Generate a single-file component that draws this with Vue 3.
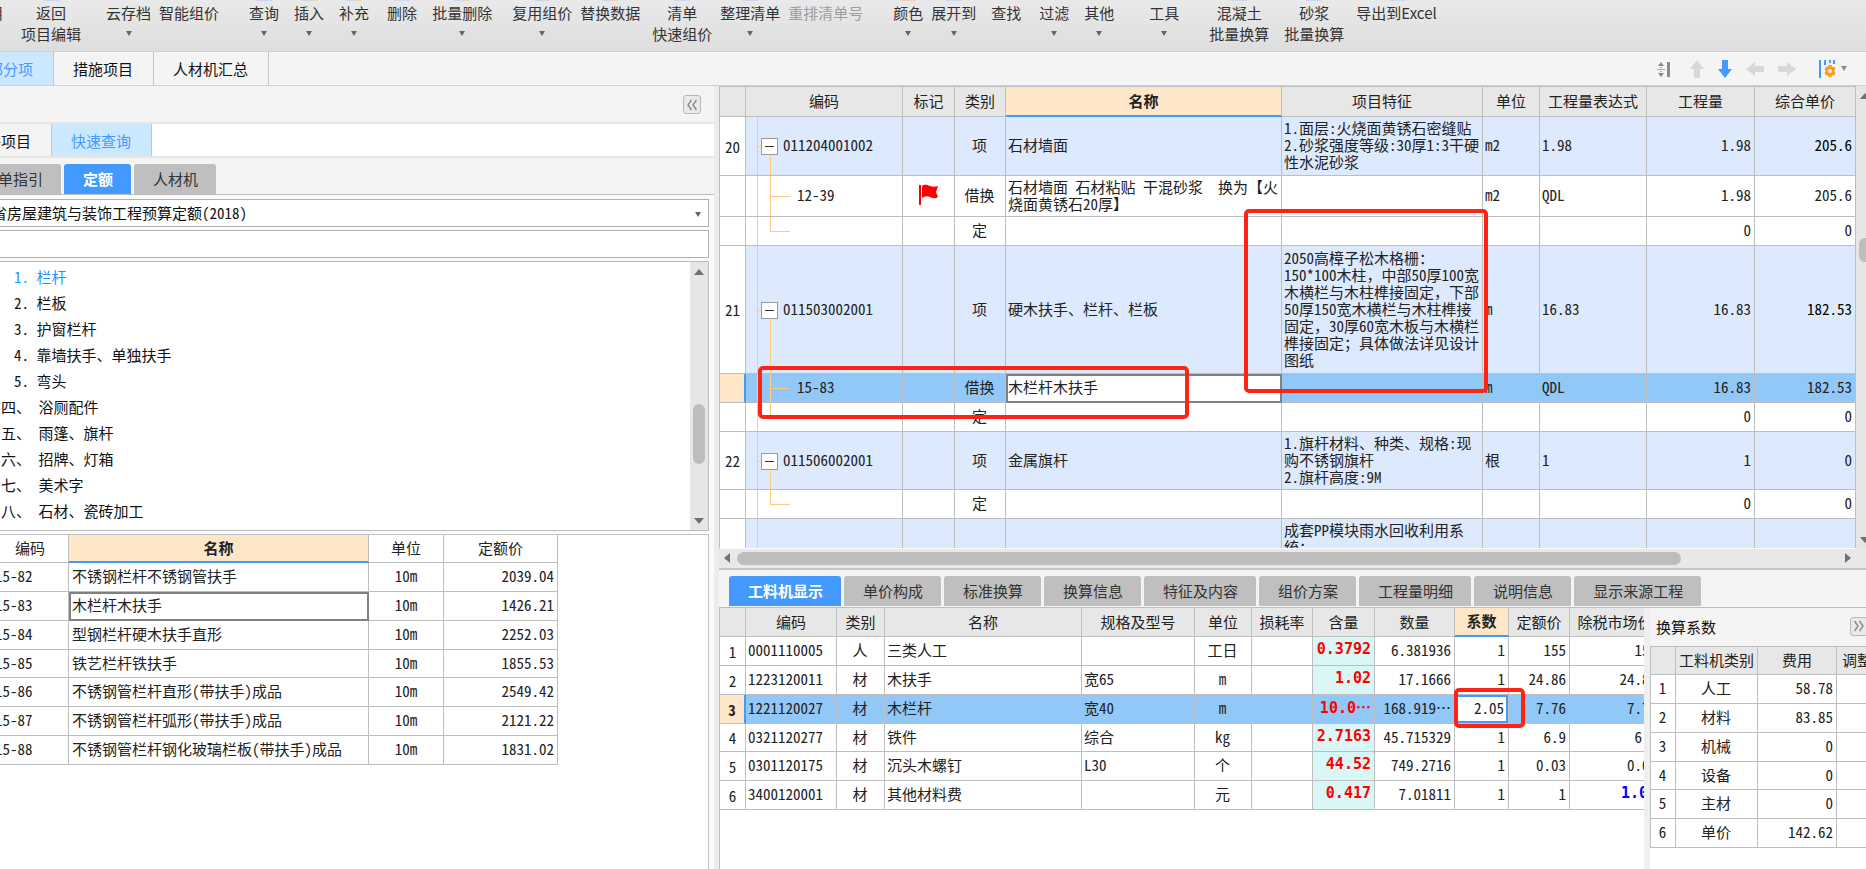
<script setup>
import { ref } from 'vue'

const tools = [
  { a: '调用', gap: 'g0', bit: 'warm' },
  { a: '返回', b: '项目编辑', gap: 'g18', bit: 'cool' },
  { a: '云存档', drop: true, gap: 'g25' },
  { a: '智能组价', gap: 'g8' },
  { a: '查询', drop: true, gap: 'g30', bit: 'cool' },
  { a: '插入', drop: true, gap: 'g15', bit: 'mix' },
  { a: '补充', drop: true, gap: 'g15', bit: 'mix' },
  { a: '删除', gap: 'g18', bit: 'cool' },
  { a: '批量删除', drop: true, gap: 'g15', bit: 'mix' },
  { a: '复用组价', drop: true, gap: 'g20', bit: 'cool' },
  { a: '替换数据', gap: 'g8', bit: 'mix' },
  { a: '清单', b: '快速组价', gap: 'g12', bit: 'cool' },
  { a: '整理清单', drop: true, gap: 'g8', bit: 'cool' },
  { a: '重排清单号', off: true, gap: 'g8' },
  { a: '颜色', drop: true, gap: 'g30', bit: 'pink' },
  { a: '展开到', drop: true, gap: 'g8', bit: 'cool' },
  { a: '查找', gap: 'g15' },
  { a: '过滤', drop: true, gap: 'g18' },
  { a: '其他', drop: true, gap: 'g15' },
  { a: '工具', drop: true, gap: 'g35' },
  { a: '混凝土', b: '批量换算', gap: 'g30', bit: 'cool' },
  { a: '砂浆', b: '批量换算', gap: 'g15', bit: 'cool' },
  { a: '导出到Excel', gap: 'g12', bit: 'cool' },
]

const tree = [
  { n: '1.', t: '栏杆', sub: true, on: true },
  { n: '2.', t: '栏板', sub: true },
  { n: '3.', t: '护窗栏杆', sub: true },
  { n: '4.', t: '靠墙扶手、单独扶手', sub: true },
  { n: '5.', t: '弯头', sub: true },
  { n: '四、', t: '浴厕配件' },
  { n: '五、', t: '雨篷、旗杆' },
  { n: '六、', t: '招牌、灯箱' },
  { n: '七、', t: '美术字' },
  { n: '八、', t: '石材、瓷砖加工' },
]

const quotas = [
  ['15-82', '不锈钢栏杆不锈钢管扶手', '2039.04'],
  ['15-83', '木栏杆木扶手', '1426.21'],
  ['15-84', '型钢栏杆硬木扶手直形', '2252.03'],
  ['15-85', '铁艺栏杆铁扶手', '1855.53'],
  ['15-86', '不锈钢管栏杆直形(带扶手)成品', '2549.42'],
  ['15-87', '不锈钢管栏杆弧形(带扶手)成品', '2121.22'],
  ['15-88', '不锈钢管栏杆钢化玻璃栏板(带扶手)成品', '1831.02'],
]

const items = [
  { h: 'h59', kind: 'item', no: '20', code: '011204001002', type: '项', name: '石材墙面', feat: '1.面层:火烧面黄锈石密缝贴\n2.砂浆强度等级:30厚1:3干硬\n性水泥砂浆', unit: 'm2', expr: '1.98', qty: '1.98', price: '205.6', strong: true },
  { h: 'h41', kind: 'child', code: '12-39', flag: true, type: '借换', name: '石材墙面 石材粘贴 干混砂浆  换为【火\n烧面黄锈石20厚】', unit: 'm2', expr: 'QDL', qty: '1.98', price: '205.6' },
  { h: 'h29', kind: 'last', type: '定', qty: '0', price: '0' },
  { h: 'h128', kind: 'item', no: '21', code: '011503002001', type: '项', name: '硬木扶手、栏杆、栏板', feat: '2050高樟子松木格栅：\n150*100木柱，中部50厚100宽\n木横栏与木柱榫接固定，下部\n50厚150宽木横栏与木柱榫接\n固定，30厚60宽木板与木横栏\n榫接固定；具体做法详见设计\n图纸', unit: 'm', expr: '16.83', qty: '16.83', price: '182.53', strong: true },
  { h: 'h29', kind: 'child', sel: true, code: '15-83', type: '借换', name: '木栏杆木扶手', unit: 'm', expr: 'QDL', qty: '16.83', price: '182.53' },
  { h: 'h29', kind: 'last', type: '定', qty: '0', price: '0' },
  { h: 'h58', kind: 'item', no: '22', code: '011506002001', type: '项', name: '金属旗杆', feat: '1.旗杆材料、种类、规格:现\n购不锈钢旗杆\n2.旗杆高度:9M', unit: '根', expr: '1', qty: '1', price: '0' },
  { h: 'h29', kind: 'last', type: '定', qty: '0', price: '0' },
  { h: 'h58', kind: 'tail', feat: '成套PP模块雨水回收利用系\n统：' },
]

// Full-width punctuation keeps its full advance, so it is split from half-width runs.
const lines = (text) => (text ? text.split('\n') : [])
const runs = (line) => line.split(/([，；：])/).filter(Boolean)
const isWide = (run) => /^[，；：]$/.test(run)

const detailTabs = ['工料机显示', '单价构成', '标准换算', '换算信息', '特征及内容', '组价方案', '工程量明细', '说明信息', '显示来源工程']

const details = [
  ['0001110005', '人', '三类人工', '', '工日', '0.3792', '6.381936', '1', '155', '155'],
  ['1223120011', '材', '木扶手', '宽65', 'm', '1.02', '17.1666', '1', '24.86', '24.86'],
  ['1221120027', '材', '木栏杆', '宽40', 'm', '10.0', '168.919…', '', '7.76', '7.76'],
  ['0321120277', '材', '铁件', '综合', 'kg', '2.7163', '45.715329', '1', '6.9', '6.9'],
  ['0301120175', '材', '沉头木螺钉', 'L30', '个', '44.52', '749.2716', '1', '0.03', '0.03'],
  ['3400120001', '材', '其他材料费', '', '元', '0.417', '7.01811', '1', '1', '1.00'],
]

const factors = [
  ['人工', '58.78'],
  ['材料', '83.85'],
  ['机械', '0'],
  ['设备', '0'],
  ['主材', '0'],
  ['单价', '142.62'],
]

const keyword = ref('')
const factor = ref('2.05')
</script>

<template>
  <div class="app">
    <header class="toolbar">
      <button v-for="(t, i) in tools" :key="i" type="button" class="tool" :class="[t.gap, t.bit, { off: t.off }]" :disabled="t.off">
        <span>{{ t.a }}</span>
        <span v-if="t.b">{{ t.b }}</span>
        <i v-if="t.drop" class="caret"></i>
      </button>
    </header>

    <div class="pagebar">
      <nav class="pages">
        <button type="button" class="page first on">分部分项</button>
        <button type="button" class="page">措施项目</button>
        <button type="button" class="page">人材机汇总</button>
      </nav>
      <div class="actions">
        <button type="button" aria-label="行高">
          <svg width="14" height="18" viewBox="0 0 14 18"><path d="M4 2l3 4H1zM4 17l3-4H1z" fill="#8a8a8a" /><path d="M3 7h2v1H3zM0 9h8v1H0zM3 11h2v1H3z" fill="#aaa" /><path d="M10 2h3v15h-3z" fill="#8a8a8a" /></svg>
        </button>
        <button type="button" aria-label="上移">
          <svg width="14" height="18" viewBox="0 0 14 18"><path d="M7 0l7 9h-4v9H4V9H0z" fill="#d8d8d8" /></svg>
        </button>
        <button type="button" aria-label="下移">
          <svg width="14" height="18" viewBox="0 0 14 18"><path d="M7 18l7-9h-4V0H4v9H0z" fill="#4499ff" /></svg>
        </button>
        <button type="button" aria-label="升级">
          <svg width="18" height="14" viewBox="0 0 18 14"><path d="M0 7l9-7v4h9v6H9v4z" fill="#d8d8d8" /></svg>
        </button>
        <button type="button" aria-label="降级">
          <svg width="18" height="14" viewBox="0 0 18 14"><path d="M18 7L9 0v4H0v6h9v4z" fill="#d8d8d8" /></svg>
        </button>
        <button type="button" class="cols" aria-label="列设置">
          <svg width="18" height="20" viewBox="0 0 18 20">
            <path d="M1 1h2v18H1zM6 1h2v5H6zM11 1h2v3h-2zM15 1h2v4h-2z" fill="#4499ff" />
            <path d="M10.500 6h3l.6 2 2-.4 1.400 2.600-1.400 1.800 1.400 1.800-1.400 2.600-2-.4-.6 2h-3l-.6-2-2 .4-1.400-2.600L7.900 12l-1.400-1.800 1.400-2.600 2 .4z" fill="#ff9a1f" />
            <circle cx="12" cy="12" r="2" fill="#f5f5f5" />
          </svg>
          <i class="caret soft"></i>
        </button>
      </div>
    </div>

    <main class="body">
      <aside class="left">
        <div class="fold">
          <button type="button" class="chev" aria-label="收起">
            <svg width="12" height="12" viewBox="0 0 12 12"><path d="M5.500 1L2 6l3.500 5M10.500 1L7 6l3.500 5" fill="none" stroke="#8a8a8a" stroke-width="1.400" /></svg>
          </button>
        </div>
        <nav class="subpages">
          <button type="button" class="page second">补项目</button>
          <button type="button" class="page on">快速查询</button>
        </nav>
        <nav class="pills">
          <button type="button" class="pill guide">清单指引</button>
          <button type="button" class="pill on">定额</button>
          <button type="button" class="pill">人材机</button>
        </nav>
        <div class="query">
          <div class="pick">
            <select aria-label="定额库"><option>省房屋建筑与装饰工程预算定额(2018)</option></select>
            <i class="caret"></i>
          </div>
          <input v-model="keyword" class="search" type="text" aria-label="查询" />
          <div class="treebox">
            <ul>
              <li v-for="r in tree" :key="r.t" :class="{ sub: r.sub, on: r.on }">{{ r.n }} {{ r.t }}</li>
            </ul>
            <div class="vbar"><i class="up"></i><i class="thumb"></i><i class="down"></i></div>
          </div>
          <div class="quota">
            <table>
              <colgroup><col class="q1" /><col class="q2" /><col class="q3" /><col class="q4" /></colgroup>
              <thead>
                <tr><th>编码</th><th class="hot">名称</th><th>单位</th><th>定额价</th></tr>
              </thead>
              <tbody>
                <tr v-for="(q, i) in quotas" :key="q[0]">
                  <td>{{ q[0] }}</td>
                  <td :class="{ cur: i === 1 }">{{ q[1] }}</td>
                  <td class="c">10m</td>
                  <td class="r">{{ q[2] }}</td>
                </tr>
              </tbody>
            </table>
          </div>
        </div>
      </aside>

      <section class="right">
        <div class="main">
          <div class="gridwrap">
            <div class="grid">
              <table>
                <colgroup>
                  <col class="m0" /><col class="m1" /><col class="m2" /><col class="m3" /><col /><col class="m5" /><col class="m6" /><col class="m7" /><col class="m8" /><col class="m9" />
                </colgroup>
                <thead>
                  <tr>
                    <th></th><th>编码</th><th>标记</th><th>类别</th><th class="hot">名称</th><th>项目特征</th><th>单位</th><th>工程量表达式</th><th>工程量</th><th>综合单价</th>
                  </tr>
                </thead>
                <tbody>
                  <tr v-for="(r, i) in items" :key="i" :class="[r.kind, r.h, { sel: r.sel }]">
                    <td class="no">{{ r.no }}</td>
                    <td class="code">
                      <i class="trunk"></i><i v-if="r.kind !== 'tail'" class="stem"></i><i v-if="r.kind !== 'tail'" class="twig"></i>
                      <button v-if="r.kind === 'item'" type="button" class="minus" aria-label="折叠"></button>
                      <span>{{ r.code }}</span>
                    </td>
                    <td class="c">
                      <svg v-if="r.flag" class="flag" width="21" height="22" viewBox="0 0 21 22"><path d="M1 1h2v20H1z" fill="#f00" /><path d="M4 2c3-2 5-1 8 0s5 1 8 0l-2 6 2 5c-3 2-6 1-8 0s-5-1-8 1z" fill="#f00" /></svg>
                    </td>
                    <td class="c">{{ r.type }}</td>
                    <td class="pre" :class="{ cur: r.sel }">{{ r.name }}</td>
                    <td>
                      <div v-for="(l, j) in lines(r.feat)" :key="j"><span v-for="(p, k) in runs(l)" :key="k" :class="{ wide: isWide(p) }">{{ p }}</span></div>
                    </td>
                    <td>{{ r.unit }}</td>
                    <td>{{ r.expr }}</td>
                    <td class="r">{{ r.qty }}</td>
                    <td class="r" :class="{ strong: r.strong }">{{ r.price }}</td>
                  </tr>
                </tbody>
              </table>
            </div>
            <div class="vbar slim"><i class="up"></i><i class="thumb"></i><i class="down"></i></div>
          </div>
          <div class="hbar"><i class="prev"></i><i class="thumb"></i><i class="next"></i></div>
          <div class="mark mark-row"></div>
          <div class="mark mark-feat"></div>
        </div>

        <div class="lower">
          <nav class="pills dtabs">
            <button v-for="(t, i) in detailTabs" :key="t" type="button" class="pill" :class="{ on: i === 0 }">{{ t }}</button>
          </nav>
          <div class="split">
            <div class="detail">
              <table>
                <colgroup>
                  <col class="m0" /><col class="d1" /><col class="d2" /><col class="d3" /><col class="d4" /><col class="m6" /><col class="d6" /><col class="d7" /><col class="d8" /><col class="d9" /><col class="d6" /><col class="d11" />
                </colgroup>
                <thead>
                  <tr>
                    <th></th><th>编码</th><th>类别</th><th>名称</th><th>规格及型号</th><th>单位</th><th>损耗率</th><th>含量</th><th>数量</th><th class="hot">系数</th><th>定额价</th><th>除税市场价</th>
                  </tr>
                </thead>
                <tbody>
                  <tr v-for="(d, i) in details" :key="d[0]" :class="{ sel: i === 2 }">
                    <td class="no">{{ i + 1 }}</td>
                    <td>{{ d[0] }}</td>
                    <td class="c">{{ d[1] }}</td>
                    <td>{{ d[2] }}</td>
                    <td>{{ d[3] }}</td>
                    <td class="c">{{ d[4] }}</td>
                    <td></td>
                    <td class="r dose">{{ d[5] }}<span v-if="i === 2" class="dots">…</span></td>
                    <td class="r">{{ d[6] }}</td>
                    <td v-if="i === 2" class="edit"><input v-model="factor" type="text" aria-label="系数" /></td>
                    <td v-else class="r">{{ d[7] }}</td>
                    <td class="r">{{ d[8] }}</td>
                    <td class="r" :class="{ blue: i === 5 }">{{ d[9] }}</td>
                  </tr>
                </tbody>
              </table>
              <div class="mark mark-factor"></div>
            </div>
            <div class="factors">
              <div class="fhead">
                <span>换算系数</span>
                <button type="button" class="chev" aria-label="展开">
                  <svg width="12" height="12" viewBox="0 0 12 12"><path d="M1.500 1L5 6l-3.500 5M6.500 1L10 6l-3.500 5" fill="none" stroke="#8a8a8a" stroke-width="1.400" /></svg>
                </button>
              </div>
              <table>
                <colgroup><col class="f0" /><col class="f1" /><col class="f2" /><col class="f3" /></colgroup>
                <thead><tr><th></th><th>工料机类别</th><th>费用</th><th>调整系数</th></tr></thead>
                <tbody>
                  <tr v-for="(f, i) in factors" :key="f[0]">
                    <td class="c">{{ i + 1 }}</td><td class="c">{{ f[0] }}</td><td class="r">{{ f[1] }}</td><td></td>
                  </tr>
                </tbody>
              </table>
            </div>
          </div>
        </div>
      </section>
    </main>
  </div>
</template>

<style>
body {
  margin: 0;
  overflow: hidden;
}
</style>

<style scoped>
.app {
  height: 100vh;
  display: flex;
  flex-direction: column;
  overflow: hidden;
  background: #f4f4f4;
  color: #222;
  font: 15px/17px "Noto Sans CJK SC", sans-serif;
  font-feature-settings: "hwid";
}
.app * {
  box-sizing: border-box;
}
button,
input,
select {
  margin: 0;
  padding: 0;
  border: 0;
  border-radius: 0;
  background: none;
  color: inherit;
  font: inherit;
  font-feature-settings: inherit;
  white-space: nowrap;
}
svg {
  display: block;
}
.caret {
  width: 0;
  height: 0;
  border: 3px solid transparent;
  border-top: 5px solid #666;
  border-bottom: 0;
}
.caret.soft {
  border-top-color: #8a8a8a;
}

.toolbar {
  flex: none;
  height: 52px;
  display: flex;
  align-items: flex-start;
  overflow: hidden;
  border-bottom: 1px solid #cfcfcf;
  background: linear-gradient(#e9e9e9, #dedede);
  color: #333;
  font-feature-settings: normal;
}
.tool {
  position: relative;
  flex: none;
  height: 51px;
  padding-top: 4px;
  display: flex;
  flex-direction: column;
  align-items: center;
  gap: 4px;
}
.tool .caret {
  margin-top: 6px;
}
.tool.off {
  color: #9d9d9d;
}
.tool::before {
  content: "";
  position: absolute;
  top: 0;
  left: calc(50% - 8px);
  width: 16px;
  height: 1px;
}
.cool::before { background: #c9d8ec; }
.warm::before { background: #ffab4a; }
.pink::before { background: #eccdc6; }
.mix::before { background: linear-gradient(90deg, #c9d8ec 60%, #f3d5ad 60%); }
.g0 { margin-left: -27px; }
.g8 { margin-left: 8px; }
.g12 { margin-left: 12px; }
.g15 { margin-left: 15px; }
.g18 { margin-left: 18px; }
.g20 { margin-left: 20px; }
.g25 { margin-left: 25px; }
.g30 { margin-left: 30px; }
.g35 { margin-left: 35px; }

.pagebar {
  flex: none;
  height: 34px;
  display: flex;
  justify-content: space-between;
  border-bottom: 1px solid #d2d2d2;
}
.pages,
.subpages {
  display: flex;
}
.page {
  padding: 0 20px 0 19px;
  border-right: 1px solid #c6c6c6;
  color: #111;
}
.page.on {
  background: #cce8ff;
  color: #4499ff;
}
.page.first {
  margin-left: -46px;
}
.page.second {
  margin-left: -33px;
}
.actions {
  display: flex;
  align-items: center;
  padding: 0 19px 0 0;
  gap: 14px;
}
.actions button:first-child {
  margin-right: 5px;
}
.actions .cols {
  display: flex;
  align-items: center;
  gap: 5px;
  margin-left: 8px;
}

.body {
  flex: 1;
  min-height: 0;
  display: flex;
}
.left {
  flex: none;
  width: 714px;
  display: flex;
  flex-direction: column;
  overflow: hidden;
}
.fold {
  flex: none;
  height: 38px;
  padding: 9px 13px;
  display: flex;
  justify-content: flex-end;
  border-bottom: 2px solid #e6e6e6;
}
.chev {
  width: 18px;
  height: 19px;
  display: grid;
  place-items: center;
  border: 1px solid #b8b8b8;
  border-radius: 3px;
  background: #e9e9e9;
}
.subpages {
  flex: none;
  height: 34px;
  border-bottom: 2px solid #e6e6e6;
  background: #fff;
}
.subpages .page {
  background: #f4f4f4;
}
.subpages .page.on {
  background: #cce8ff;
}
.pills {
  flex: none;
  height: 37px;
  padding-top: 6px;
  display: flex;
  gap: 3px;
  border-bottom: 1px solid #bcbcbc;
}
.pill {
  height: 30px;
  padding: 0 18px 1px 19px;
  border-radius: 3px 3px 0 0;
  background: #bfbfbf;
  color: #333;
}
.pill.on {
  background: #4499ff;
  color: #fff;
  font-weight: bold;
}
.pill.guide {
  margin-left: -36px;
}
.query {
  flex: 1;
  min-height: 0;
  margin-left: -9px;
  padding: 4px 5px 0 0;
  display: flex;
  flex-direction: column;
  gap: 3px;
  background: #fafafa;
}
.pick {
  position: relative;
  flex: none;
  height: 28px;
  border: 1px solid #b0b0b0;
  background: #fff;
}
.pick select {
  width: 100%;
  height: 26px;
  padding-bottom: 2px;
  appearance: none;
  color: #111;
}
.pick .caret {
  position: absolute;
  right: 7px;
  top: 12px;
}
.search {
  flex: none;
  height: 28px;
  padding: 0 4px;
  border: 1px solid #b0b0b0;
  background: #fff;
}
.treebox {
  flex: none;
  height: 270px;
  display: flex;
  justify-content: space-between;
  border: 1px solid #bcbcbc;
  background: #fff;
}
.treebox ul {
  margin: 0;
  padding: 2px 0 0 9px;
  list-style: none;
  color: #111;
}
.treebox li {
  height: 26px;
  line-height: 26px;
  white-space: nowrap;
}
.treebox li.sub {
  padding-left: 13px;
}
.treebox li.on {
  color: #1e96ff;
}
.vbar {
  position: relative;
  width: 18px;
  background: #e6e6e6;
}
.vbar i,
.hbar i {
  position: absolute;
}
.up,
.down {
  left: 4px;
  border: 5px solid transparent;
}
.up {
  top: 7px;
  border-top: 0;
  border-bottom: 6px solid #707078;
}
.down {
  bottom: 6px;
  border-bottom: 0;
  border-top: 6px solid #707078;
}
.vbar .thumb {
  top: 142px;
  left: 3px;
  width: 12px;
  height: 60px;
  border-radius: 6px;
  background: #bdbdbd;
}
.quota {
  flex: 1;
  min-height: 0;
  border: 1px solid #c4c4c4;
  border-bottom: 0;
  background: #fff;
}

table {
  table-layout: fixed;
  border-collapse: separate;
  border-spacing: 0;
}
th,
td {
  height: 29px;
  padding: 0 3px 3px 2px;
  border-right: 1px solid #bebebe;
  border-bottom: 1px solid #bebebe;
  font-weight: normal;
  text-align: left;
  white-space: nowrap;
  overflow: hidden;
}
th {
  padding: 0 0 2px;
  text-align: center;
}
tbody tr:nth-child(4n) td {
  height: 28px;
}
.c {
  text-align: center;
}
.r {
  text-align: right;
}
.hot {
  background: #fee6c9;
  border-bottom: 2px solid #4499ff;
  font-weight: bold;
}
.cur {
  background: #fff;
  outline: 2px solid #808080;
  outline-offset: -2px;
}
.quota table {
  width: 566px;
}
.q1 { width: 77px; }
.q2 { width: 300px; }
.q3 { width: 75px; }
.q4 { width: 114px; }
.quota th {
  height: 28px;
}
.quota td {
  padding-left: 3px;
}

.right {
  flex: 1;
  min-width: 0;
  display: flex;
  flex-direction: column;
  border-left: 5px solid #ececec;
}
.main {
  position: relative;
  flex: 1;
  min-height: 0;
  display: flex;
  flex-direction: column;
}
.gridwrap {
  flex: 1;
  min-height: 0;
  display: flex;
}
.grid {
  flex: 1;
  min-width: 0;
  overflow: hidden;
  border-left: 1px solid #bebebe;
  border-bottom: 1px solid #fff;
  background: #fff;
}
.grid table {
  width: 100%;
}
.grid th {
  height: 31px;
  border-top: 1px solid #bebebe;
}
.grid th,
.detail th,
.factors th {
  background: #e7e7e7;
}
.grid th.hot,
.detail th.hot {
  background: #fee6c9;
}
.m0 { width: 26px; }
.m1 { width: 157px; }
.m2 { width: 52px; }
.m3 { width: 51px; }
.m5 { width: 201px; }
.m6 { width: 57px; }
.m7 { width: 107px; }
.m8 { width: 108px; }
.m9 { width: 101px; }
.grid .h29 td { height: 29px; }
.grid .h41 td { height: 41px; }
.grid .h58 td { height: 58px; }
.grid .h59 td { height: 59px; }
.grid .h128 td { height: 128px; }
.item td,
.tail td {
  background: #dde9fd;
}
.tail td {
  padding-top: 2px;
  vertical-align: top;
}
.wide {
  font-feature-settings: normal;
}
.strong {
  color: #000;
}
.sel td {
  background: #92c8f7;
}
.sel td.cur {
  background: #fff;
}
tr td.no {
  padding: 0;
  background: #fff;
  text-align: center;
}
tr.sel td.no {
  border-right: 2px solid #4499ff;
  background: #fee6c9;
  font-weight: bold;
}
.pre {
  white-space: pre;
}
.code {
  position: relative;
}
.code span {
  padding-left: 49px;
}
.item .code span {
  padding-left: 35px;
}
.code i {
  position: absolute;
  background: #ffcb82;
}
.trunk {
  left: 11px;
  top: 0;
  bottom: -1px;
  width: 1px;
}
.stem {
  left: 24px;
  top: 0;
  bottom: -1px;
  width: 1px;
}
.item .stem {
  top: 50%;
}
.last .stem {
  bottom: 50%;
}
.twig {
  left: 24px;
  top: 50%;
  width: 20px;
  height: 1px;
}
.item .twig {
  left: 11px;
  width: 5px;
}
.minus {
  position: absolute;
  left: 15px;
  top: calc(50% - 8px);
  width: 17px;
  height: 17px;
  border: 1px solid #999;
  background: linear-gradient(#333, #333) center / 9px 1px no-repeat #fff;
}
.flag {
  margin: 0 auto;
}
.vbar.slim {
  flex: none;
  width: 10px;
  overflow: hidden;
}
.vbar.slim .thumb {
  top: 152px;
  height: 24px;
}
.hbar {
  position: relative;
  flex: none;
  height: 21px;
  border-bottom: 2px solid #c4c4c4;
  background: #e8e8e8;
}
.hbar .thumb {
  left: 18px;
  right: 185px;
  top: 3px;
  height: 13px;
  border-radius: 7px;
  background: #bdbdbd;
}
.prev,
.next {
  top: 4px;
}
.hbar .prev {
  left: 5px;
  border: 5px solid transparent;
  border-left: 0;
  border-right: 6px solid #707078;
}
.hbar .next {
  right: 15px;
  border: 5px solid transparent;
  border-right: 0;
  border-left: 6px solid #707078;
}
.mark {
  position: absolute;
  border: 4px solid #ff2314;
  border-radius: 5px;
  pointer-events: none;
}
.mark-row {
  left: 39px;
  top: 280px;
  width: 431px;
  height: 53px;
}
.mark-feat {
  right: 378px;
  top: 123px;
  width: 244px;
  height: 184px;
}

.lower {
  flex: none;
  height: 299px;
  display: flex;
  flex-direction: column;
}
.dtabs {
  height: 38px;
  padding: 6px 0 0 10px;
}
.split {
  flex: 1;
  min-height: 0;
  display: flex;
}
.detail {
  position: relative;
  flex: 1;
  min-width: 0;
  overflow: hidden;
  border-left: 1px solid #bebebe;
  background: #fff;
}
.detail table {
  width: 941px;
}
.d1 { width: 91px; }
.d2 { width: 48px; }
.d3 { width: 197px; }
.d4 { width: 113px; }
.d6 { width: 61px; }
.d7 { width: 62px; }
.d8 { width: 80px; }
.d9 { width: 54px; }
.d11 { width: 91px; }
td.dose {
  color: #f00;
  font: bold 15px/17px "DejaVu Sans Mono", monospace;
}
tr:not(.sel) .dose {
  background: #daf7f8;
}
.dots {
  font-family: "Noto Sans CJK SC", sans-serif;
}
.blue {
  color: #00f;
  font: bold 15px/17px "DejaVu Sans Mono", monospace;
}
td.edit {
  padding: 0;
  background: #fff;
}
.edit input {
  display: block;
  width: 100%;
  height: 28px;
  padding: 0 2px 3px 0;
  border: 2px solid #4499ff;
  text-align: right;
}
.mark-factor {
  left: 734px;
  top: 80px;
  width: 71px;
  height: 40px;
}
.factors {
  flex: none;
  width: 222px;
  overflow: hidden;
  border-left: 6px solid #efefef;
  background: #fff;
}
.fhead {
  height: 38px;
  padding: 0 0 2px 6px;
  display: flex;
  align-items: center;
  justify-content: space-between;
  background: #f4f4f4;
  color: #111;
}
.fhead .chev {
  margin-right: -2px;
}
.factors table {
  width: 258px;
  border-left: 1px solid #bebebe;
}
.factors th {
  border-top: 1px solid #bebebe;
}
.f0 { width: 25px; }
.f1 { width: 82px; }
.f2 { width: 79px; }
.f3 { width: 71px; }
</style>
